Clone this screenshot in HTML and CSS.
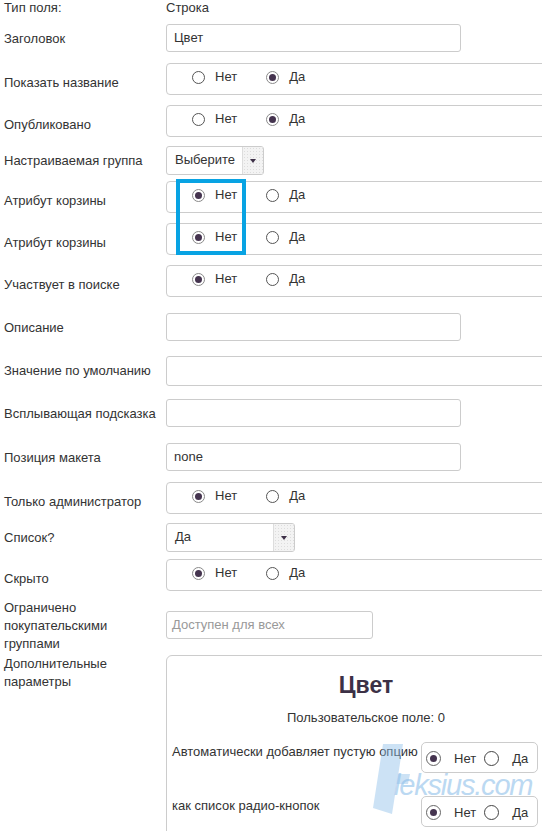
FILE: index.html
```html
<!DOCTYPE html>
<html lang="ru">
<head>
<meta charset="utf-8">
<title>Поле</title>
<link rel="stylesheet" href="styles.css">
</head>
<body>
<div class="form">
  <div class="row row-type">
    <div class="label">Тип поля:</div>
    <div class="plain">Строка</div>
  </div>
  <div class="row row-input gap-8">
    <div class="label">Заголовок</div>
    <div class="input">Цвет</div>
  </div>
  <div class="row row-radio gap-11">
    <div class="label">Показать название</div>
    <div class="radio-group">
      <span class="radio"></span><span class="opt">Нет</span>
      <span class="radio on second"></span><span class="opt">Да</span>
    </div>
  </div>
  <div class="row row-radio gap-10">
    <div class="label">Опубликовано</div>
    <div class="radio-group">
      <span class="radio"></span><span class="opt">Нет</span>
      <span class="radio on second"></span><span class="opt">Да</span>
    </div>
  </div>
  <div class="row row-input gap-9">
    <div class="label">Настраиваемая группа</div>
    <div class="select select-short"><span class="select-text">Выберите</span><span class="select-arrow"></span></div>
  </div>
  <div class="row row-radio gap-6">
    <div class="label">Атрибут корзины</div>
    <div class="radio-group">
      <span class="radio on"></span><span class="opt">Нет</span>
      <span class="radio second"></span><span class="opt">Да</span>
    </div>
  </div>
  <div class="row row-radio gap-10">
    <div class="label">Атрибут корзины</div>
    <div class="radio-group">
      <span class="radio on"></span><span class="opt">Нет</span>
      <span class="radio second"></span><span class="opt">Да</span>
    </div>
  </div>
  <div class="row row-radio gap-10">
    <div class="label">Участвует в поиске</div>
    <div class="radio-group">
      <span class="radio on"></span><span class="opt">Нет</span>
      <span class="radio second"></span><span class="opt">Да</span>
    </div>
  </div>
  <div class="row row-input gap-16">
    <div class="label">Описание</div>
    <div class="input"></div>
  </div>
  <div class="row row-input gap-15">
    <div class="label">Значение по умолчанию</div>
    <div class="input input-wide"></div>
  </div>
  <div class="row row-input gap-13">
    <div class="label">Всплывающая подсказка</div>
    <div class="input"></div>
  </div>
  <div class="row row-input gap-16">
    <div class="label">Позиция макета</div>
    <div class="input">none</div>
  </div>
  <div class="row row-radio gap-11">
    <div class="label">Только администратор</div>
    <div class="radio-group">
      <span class="radio on"></span><span class="opt">Нет</span>
      <span class="radio second"></span><span class="opt">Да</span>
    </div>
  </div>
  <div class="row row-input gap-9">
    <div class="label">Список?</div>
    <div class="select select-long"><span class="select-text">Да</span><span class="select-arrow"></span></div>
  </div>
  <div class="row row-radio gap-7">
    <div class="label">Скрыто</div>
    <div class="radio-group">
      <span class="radio on"></span><span class="opt">Нет</span>
      <span class="radio second"></span><span class="opt">Да</span>
    </div>
  </div>
  <div class="row gap-8">
    <div class="label label-narrow">Ограничено покупательскими группами</div>
    <div class="input input-short placeholder">Доступен для всех</div>
  </div>
  <div class="row gap-2">
    <div class="label label-narrow">Дополнительные параметры</div>
    <div class="extra-box">
      <div class="extra-title">Цвет</div>
      <div class="extra-sub">Пользовательское поле: 0</div>
      <div class="extra-row">
        <div class="extra-label">Автоматически добавляет пустую опцию</div>
        <div class="mini-group">
          <span class="radio big on"></span><span class="mini-opt">Нет</span>
          <span class="radio big"></span><span class="mini-opt">Да</span>
        </div>
      </div>
      <div class="extra-row extra-row-2">
        <div class="extra-label">как список радио-кнопок</div>
        <div class="mini-group">
          <span class="radio big on"></span><span class="mini-opt">Нет</span>
          <span class="radio big"></span><span class="mini-opt">Да</span>
        </div>
      </div>
    </div>
  </div>
</div>

<div class="highlight"></div>

<svg class="wm-logo" width="40" height="74" viewBox="0 0 40 74">
  <polygon points="13,2 33,2 22,72 3,66" fill="#8fc0ea"/>
  <polygon points="26,32 40,32 38,42 24,42" fill="#8fc0ea"/>
</svg>
<span class="wm-text">leksius.com</span>
</body>
</html>
```

FILE: styles.css
```css
html, body {
  margin: 0;
  padding: 0;
}

body {
  width: 542px;
  height: 831px;
  overflow: hidden;
  position: relative;
  background: #fff;
  font-family: "Liberation Sans", Arial, sans-serif;
  font-size: 13px;
  color: #333;
}

.form {
  display: flex;
  flex-direction: column;
  padding-left: 4px;
}

.row {
  display: flex;
  align-items: flex-start;
}

.label {
  width: 162px;
  flex: none;
  line-height: 18px;
}

.label-narrow {
  width: 130px;
  margin-right: 32px;
}

.row-type .label,
.row-type .plain {
  line-height: 16px;
}

.row-input .label {
  padding-top: 6px;
}

.row-radio .label {
  padding-top: 11px;
}

.gap-2 { margin-top: 2px; }
.gap-6 { margin-top: 6px; }
.gap-7 { margin-top: 7px; }
.gap-8 { margin-top: 8px; }
.gap-9 { margin-top: 9px; }
.gap-10 { margin-top: 10px; }
.gap-11 { margin-top: 11px; }
.gap-13 { margin-top: 13px; }
.gap-15 { margin-top: 15px; }
.gap-16 { margin-top: 16px; }

/* text inputs */
.input {
  box-sizing: border-box;
  width: 295px;
  height: 28px;
  border: 1px solid #ccc;
  border-radius: 3px;
  padding: 0 7px;
  line-height: 25px;
  color: #333;
  flex: none;
}

.input-wide {
  width: 390px;
  height: 30px;
}

.input-short {
  width: 207px;
  margin-top: 12px;
  padding-left: 5px;
}

.placeholder {
  color: #999;
}

/* radio groups */
.radio-group {
  box-sizing: border-box;
  width: 390px;
  height: 32px;
  border: 1px solid #ccc;
  border-radius: 4px;
  padding: 0 0 4px 25px;
  display: flex;
  align-items: center;
  flex: none;
}

.radio {
  box-sizing: border-box;
  width: 13px;
  height: 13px;
  border: 1px solid #555;
  border-radius: 50%;
  background: #fff;
  position: relative;
  flex: none;
}

.radio.on {
  border-color: #8a8a8a;
}

.radio.on::after {
  content: "";
  position: absolute;
  left: 2px;
  top: 2px;
  width: 7px;
  height: 7px;
  border-radius: 50%;
  background: #45344f;
}

.radio.second {
  margin-left: 29px;
}

.opt {
  margin-left: 10px;
  line-height: 16px;
}

/* selects */
.select {
  box-sizing: border-box;
  height: 29px;
  border: 1px solid #ccc;
  border-radius: 3px;
  display: flex;
  flex: none;
  overflow: hidden;
}

.select-short { width: 98px; }
.select-long { width: 129px; }

.select-text {
  flex: 1;
  padding-left: 8px;
  line-height: 26px;
  color: #333;
}

.select-arrow {
  width: 20px;
  border-left: 1px solid #ddd;
  background-color: #f3f3f3;
  background-image: radial-gradient(#ddd 0.6px, transparent 0.8px);
  background-size: 3px 3px;
  position: relative;
  flex: none;
}

.select-arrow::after {
  content: "";
  position: absolute;
  left: 7px;
  top: 12px;
  border-left: 3.5px solid transparent;
  border-right: 3.5px solid transparent;
  border-top: 4px solid #3e3048;
}

/* extra parameters box */
.extra-box {
  box-sizing: border-box;
  width: 400px;
  height: 200px;
  border: 1px solid #ccc;
  border-radius: 6px;
  flex: none;
  display: flex;
  flex-direction: column;
}

.extra-title {
  text-align: center;
  font-weight: bold;
  font-size: 23px;
  line-height: 26px;
  color: #3c3146;
  margin-top: 16px;
}

.extra-sub {
  text-align: center;
  line-height: 18px;
  margin-top: 11px;
}

.extra-row {
  display: flex;
  justify-content: space-between;
  align-items: flex-start;
  padding: 0 27px 0 5px;
  margin-top: 15px;
}

.extra-row-2 {
  margin-top: 23px;
}

.extra-label {
  line-height: 18px;
  padding-top: 1px;
}

.mini-group {
  box-sizing: border-box;
  width: 117px;
  height: 31px;
  border: 1px solid #ccc;
  border-radius: 5px;
  display: flex;
  align-items: center;
  padding: 2px 0 0 4px;
  flex: none;
}

.radio.big {
  width: 15px;
  height: 15px;
  border-color: #444;
}

.radio.big.on {
  border-color: #666;
}

.radio.big.on::after {
  left: 3px;
  top: 3px;
  width: 7px;
  height: 7px;
}

.mini-opt {
  margin-left: 13px;
  margin-right: 8px;
  line-height: 16px;
}

/* overlays */
.highlight {
  position: absolute;
  left: 176px;
  top: 179px;
  width: 62px;
  height: 68px;
  border: 4px solid #08a3e3;
}

.wm-logo {
  position: absolute;
  left: 370px;
  top: 742px;
  opacity: 0.45;
  pointer-events: none;
}

.wm-text {
  position: absolute;
  left: 394px;
  top: 771px;
  font-family: "Liberation Sans", Arial, sans-serif;
  font-style: italic;
  font-size: 29px;
  line-height: 29px;
  letter-spacing: -1.2px;
  color: #8fc0ea;
  opacity: 0.6;
  white-space: nowrap;
  pointer-events: none;
}
```
